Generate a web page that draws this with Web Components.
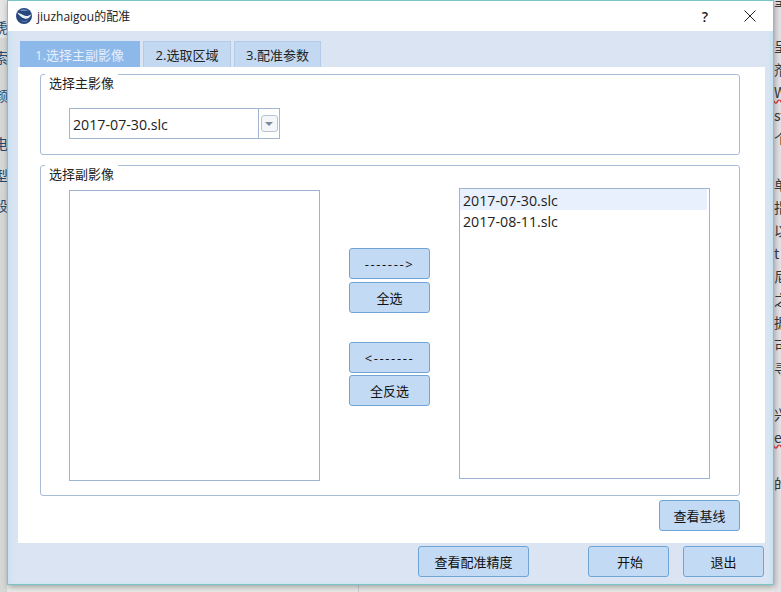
<!DOCTYPE html>
<html lang="zh">
<head>
<meta charset="utf-8">
<title>jiuzhaigou的配准</title>
<style>
  html, body { margin: 0; padding: 0; background: #e9e9e9; }
  body { font: 13px "Open Sans", "Noto Sans CJK SC", sans-serif; color: #111; }
</style>
</head>
<body>
<desk-view>
  <desk-strip slot="left" side="left" rows="18:虒,48:索,86:颜,134:电,166:型,196:段"></desk-strip>
  <desk-strip slot="right" side="right" rows="-9:呈,37:呈,60:剂,83:W,106:st,129:个,175:单,198:指,221:以,244:t,267:尼,290:之,313:据,336:可,359:寻,405:兴,428:e,474:的"></desk-strip>
  <dialog-window slot="window" heading="jiuzhaigou的配准">
    <tab-item slot="tabs" active width="120">1.选择主副影像</tab-item>
    <tab-item slot="tabs" width="88">2.选取区域</tab-item>
    <tab-item slot="tabs" width="87">3.配准参数</tab-item>

    <group-box label="选择主影像" height="81">
      <combo-box value="2017-07-30.slc"></combo-box>
    </group-box>
    <group-box label="选择副影像" height="331">
      <transfer-pane>
        <list-box slot="source"></list-box>
        <ui-button slot="moves" width="81" spaced>-------&gt;</ui-button>
        <ui-button slot="moves" width="81">全选</ui-button>
        <ui-button slot="backs" width="81" spaced>&lt;-------</ui-button>
        <ui-button slot="backs" width="81">全反选</ui-button>
        <list-box slot="target">
          <list-row selected>2017-07-30.slc</list-row>
          <list-row>2017-08-11.slc</list-row>
        </list-box>
      </transfer-pane>
    </group-box>
    <ui-button slot="panel-action" width="81">查看基线</ui-button>

    <ui-button slot="footer" width="111">查看配准精度</ui-button>
    <ui-button slot="footer" width="81" style="margin-left:59px;padding-left:3px">开始</ui-button>
    <ui-button slot="footer" width="81" style="margin-left:14px">退出</ui-button>
  </dialog-window>
</desk-view>

<script>
class DeskView extends HTMLElement {
  constructor() {
    super();
    this.attachShadow({ mode: "open" });
    this.shadowRoot.innerHTML = `
      <style>
        :host { display: block; position: relative; width: 781px; height: 592px; overflow: hidden; background: #ebebe9; }
        .seam { position: absolute; left: 358px; top: 585px; width: 1px; height: 7px; background: #cfcfcf; }
        .left { position: absolute; left: 0; top: 0; }
        .right { position: absolute; right: 0; top: 0; }
        .win { position: absolute; left: 7px; top: 0; box-shadow: 1px 2px 6px rgba(60, 70, 70, .45); }
      </style>
      <div class="seam"></div>
      <div class="left"><slot name="left"></slot></div>
      <div class="right"><slot name="right"></slot></div>
      <div class="win"><slot name="window"></slot></div>
    `;
  }
}

class DeskStrip extends HTMLElement {
  constructor() {
    super();
    this.attachShadow({ mode: "open" });
  }

  connectedCallback() {
    const side = this.getAttribute("side");
    const rows = this.getAttribute("rows").split(",").map((r) => r.split(":"));
    const html = rows
      .map(([y, t]) => `<span class="${t === "W" || t === "e" ? "typo" : ""}" style="top:${y}px">${t}</span>`)
      .join("");
    this.shadowRoot.innerHTML = `
      <style>
        :host { display: block; position: relative; width: 7px; height: 592px; overflow: hidden;
          background: ${side === "left" ? "linear-gradient(#e6e6e6 0 38px, #d6d8d6 38px)" : "#e6e2e8"};
          font: 14px/18px "Noto Sans CJK SC", sans-serif; color: ${side === "left" ? "#26466f" : "#333"}; }
        span { position: absolute; white-space: nowrap; ${side === "left" ? "right: -1px" : "left: 0"}; }
        .typo { text-decoration: underline wavy #d33; }
      </style>
      ${html}
    `;
  }
}

class DialogWindow extends HTMLElement {
  constructor() {
    super();
    this.attachShadow({ mode: "open" });
  }

  connectedCallback() {
    this.shadowRoot.innerHTML = `
      <style>
        :host { display: flex; flex-direction: column; box-sizing: border-box; width: 767px; height: 585px;
          border: 1px solid #79c4c4; background: #dae4f2; box-shadow: inset 4px 0 4px -2px #c4e2f2, inset -4px 0 4px -2px #c4e2ee; }
        .title { display: flex; align-items: center; height: 30px; flex: none; background: #fff; padding-left: 8px; font-size: 12px; color: #222; }
        .title .icon { flex: none; margin-right: 5px; }
        .title .name { flex: 1; }
        .help { width: 14px; text-align: center; margin-right: 32px; font-size: 14px; font-weight: 600; }
        .close { display: block; flex: none; margin-right: 17px; }
        .tabs { display: flex; gap: 3px; margin: 10px 0 0 12px; height: 26px; flex: none; }
        .panel { display: flex; flex-direction: column; box-sizing: border-box; width: 747px; height: 476px; margin-left: 10px; background: #fff; padding: 7px 25px 0 22px; flex: none; }
        .groups { display: flex; flex-direction: column; gap: 10px; }
        .panel-action { display: flex; justify-content: flex-end; margin-top: 4px; }
        .footer { display: flex; justify-content: flex-end; padding: 3px 9px 0 0; }
      </style>
      <div class="title">
        <svg class="icon" width="16" height="16" viewBox="0 0 16 16">
          <circle cx="8" cy="8" r="8" fill="#27477e"/>
          <path d="M3.5 2.2 C6 1 10 1 12.5 3 C10 3.2 6 3.2 3.5 2.2 Z" fill="#6f8fc2"/>
          <path d="M1.2 4.5 C4 5.2 6.5 7 9 7.8 C11 8.4 13 7.8 15.4 6 C14.2 9.6 11.6 11.4 8.6 10.6 C5.6 9.8 3 7.4 1.2 4.5 Z" fill="#e8eef6"/>
          <path d="M4 12.6 C7 14.2 10 14.2 12.6 12.6 C10 13 7 13 4 12.6 Z" fill="#6f8fc2"/>
        </svg>
        <span class="name">${this.getAttribute("heading")}</span>
        <span class="help">?</span>
        <svg class="close" width="12" height="12" viewBox="0 0 12 12"><path d="M.5 .5 L11.5 11.5 M11.5 .5 L.5 11.5" stroke="#222" stroke-width="1" fill="none"/></svg>
      </div>
      <div class="tabs"><slot name="tabs"></slot></div>
      <div class="panel">
        <div class="groups"><slot></slot></div>
        <div class="panel-action"><slot name="panel-action"></slot></div>
      </div>
      <div class="footer"><slot name="footer"></slot></div>
    `;
  }
}

class TabItem extends HTMLElement {
  constructor() {
    super();
    this.attachShadow({ mode: "open" });
  }

  connectedCallback() {
    this.shadowRoot.innerHTML = `
      <style>
        :host { display: flex; align-items: center; justify-content: center; box-sizing: border-box; height: 26px;
          width: ${this.getAttribute("width")}px; background: #c3d9f2; border: 1px solid #b3cbe6; border-bottom: 0;
          font-size: 13px; color: #222; }
        :host([active]) { background: #8db8ea; border-color: #8db8ea; color: #e6effa; padding-right: 1px; }
      </style>
      <slot></slot>
    `;
  }
}

class GroupBox extends HTMLElement {
  constructor() {
    super();
    this.attachShadow({ mode: "open" });
  }

  connectedCallback() {
    this.shadowRoot.innerHTML = `
      <style>
        :host { display: block; box-sizing: border-box; height: ${this.getAttribute("height")}px; border: 1px solid #a9bcd6; border-radius: 3px; }
        .label { width: fit-content; margin: -1px 0 0 4px; padding: 0 4px; background: #fff; line-height: 18px; font-size: 13px; color: #222; }
        .body { padding-left: 28px; }
      </style>
      <div class="label">${this.getAttribute("label")}</div>
      <div class="body"><slot></slot></div>
    `;
  }
}

class ComboBox extends HTMLElement {
  constructor() {
    super();
    this.attachShadow({ mode: "open" });
  }

  connectedCallback() {
    this.shadowRoot.innerHTML = `
      <style>
        :host { display: flex; box-sizing: border-box; width: 211px; height: 31px; margin-top: 16px; border: 1px solid #a3b6cf; background: #fff; }
        .value { flex: 1; padding-left: 3px; line-height: 31px; height: 29px; font-size: 14.2px; color: #222; border-right: 1px solid #a3b6cf; }
        .btn { flex: none; display: flex; align-items: center; justify-content: center; width: 20px; }
        .arrow { display: flex; align-items: center; justify-content: center; box-sizing: border-box; width: 17px; height: 17px; border: 1px solid #b8c4d4; border-radius: 3px; background: #f4f6fa; }
        .arrow i { width: 0; height: 0; border: 4px solid transparent; border-top: 4px solid #7d8a9c; border-bottom: 0; }
      </style>
      <div class="value">${this.getAttribute("value")}</div>
      <div class="btn"><div class="arrow"><i></i></div></div>
    `;
  }
}

class TransferPane extends HTMLElement {
  constructor() {
    super();
    this.attachShadow({ mode: "open" });
    this.shadowRoot.innerHTML = `
      <style>
        :host { display: grid; grid-template-columns: 251px 81px 251px; column-gap: 29px; align-items: start; }
        .source { margin-top: 7px; }
        .target { margin-top: 5px; }
        .mid { display: flex; flex-direction: column; margin-top: 65px; }
        .stack { display: flex; flex-direction: column; }
        .moves { gap: 3px; }
        .backs { gap: 2px; margin-top: 29px; }
      </style>
      <div class="source"><slot name="source"></slot></div>
      <div class="mid">
        <div class="stack moves"><slot name="moves"></slot></div>
        <div class="stack backs"><slot name="backs"></slot></div>
      </div>
      <div class="target"><slot name="target"></slot></div>
    `;
  }
}

class ListBox extends HTMLElement {
  constructor() {
    super();
    this.attachShadow({ mode: "open" });
    this.shadowRoot.innerHTML = `
      <style>
        :host { display: block; box-sizing: border-box; width: 251px; height: 291px; border: 1px solid #9db5d0; background: #fff; padding-right: 2px; }
      </style>
      <slot></slot>
    `;
  }
}

class ListRow extends HTMLElement {
  constructor() {
    super();
    this.attachShadow({ mode: "open" });
    this.shadowRoot.innerHTML = `
      <style>
        :host { display: block; height: 21px; line-height: 23px; padding-left: 3px; font-size: 14.2px; color: #222; }
        :host([selected]) { background: #e8effd; }
      </style>
      <slot></slot>
    `;
  }
}

class UiButton extends HTMLElement {
  constructor() {
    super();
    this.attachShadow({ mode: "open" });
  }

  connectedCallback() {
    this.shadowRoot.innerHTML = `
      <style>
        :host { display: flex; align-items: center; justify-content: center; box-sizing: border-box; flex: none;
          width: ${this.getAttribute("width")}px; height: 31px; background: #c3daf5; border: 1px solid #6fa5d6; border-radius: 3px;
          font-size: 13px; color: #111; }
        :host([spaced]) { letter-spacing: 1.6px; }
      </style>
      <slot></slot>
    `;
  }
}

customElements.define("desk-view", DeskView);
customElements.define("desk-strip", DeskStrip);
customElements.define("dialog-window", DialogWindow);
customElements.define("tab-item", TabItem);
customElements.define("group-box", GroupBox);
customElements.define("combo-box", ComboBox);
customElements.define("transfer-pane", TransferPane);
customElements.define("list-box", ListBox);
customElements.define("list-row", ListRow);
customElements.define("ui-button", UiButton);
</script>
</body>
</html>
